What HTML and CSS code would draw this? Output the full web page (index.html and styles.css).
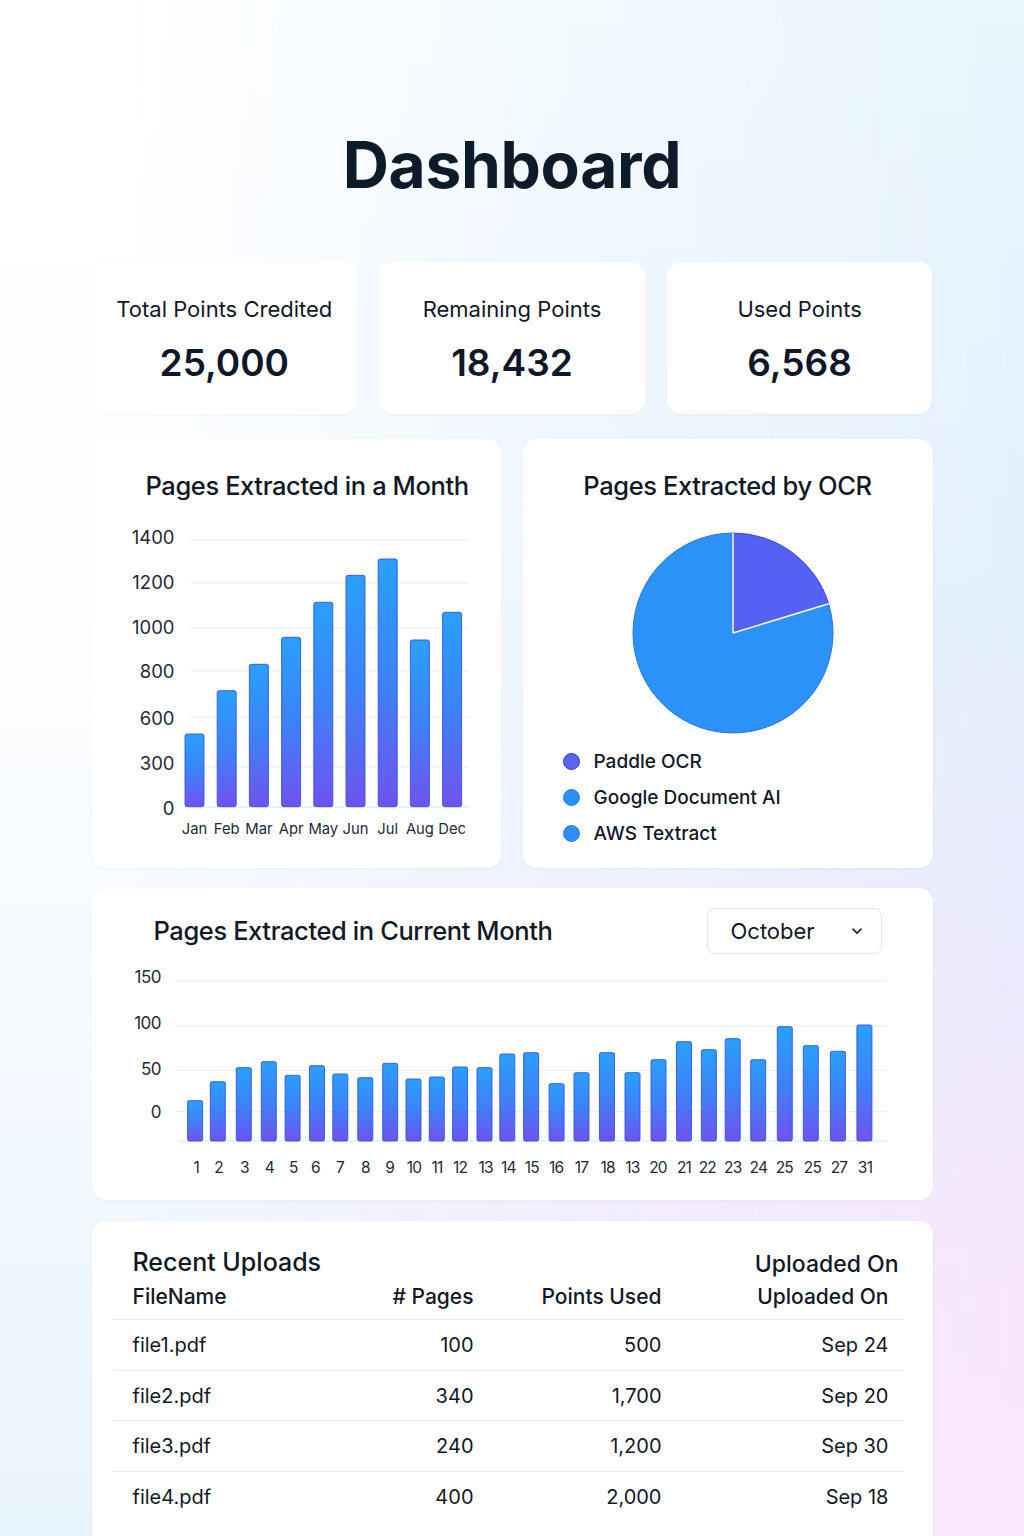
FILE: index.html
```html
<!DOCTYPE html>
<html lang="en">
<head>
<meta charset="utf-8">
<title>Dashboard</title>
<link rel="stylesheet" href="styles.css">
</head>
<body>
<main class="page">
  <h1 class="title">Dashboard</h1>

  <section class="stats">
    <div class="card stat">
      <div class="stat-label">Total Points Credited</div>
      <div class="stat-value">25,000</div>
    </div>
    <div class="card stat">
      <div class="stat-label">Remaining Points</div>
      <div class="stat-value">18,432</div>
    </div>
    <div class="card stat">
      <div class="stat-label">Used Points</div>
      <div class="stat-value">6,568</div>
    </div>
  </section>

  <section class="charts">
    <div class="card chart-card">
      <h2 class="card-title month-title">Pages Extracted in a Month</h2>
      <svg class="month-chart" width="409" height="366" viewBox="0 0 409 366">
        <defs>
          <linearGradient id="barGrad" x1="0" y1="0" x2="0" y2="1">
            <stop offset="0" stop-color="#2aa0fb"/>
            <stop offset="0.5" stop-color="#3d82f7"/>
            <stop offset="1" stop-color="#7052ef"/>
          </linearGradient>
        </defs>
        <g class="grid">
          <line x1="98" y1="38" x2="377" y2="38"/>
          <line x1="98" y1="81" x2="377" y2="81"/>
          <line x1="98" y1="126" x2="377" y2="126"/>
          <line x1="98" y1="169" x2="377" y2="169"/>
          <line x1="98" y1="215" x2="377" y2="215"/>
          <line x1="98" y1="265" x2="377" y2="265"/>
        </g>
        <line class="axis" x1="98" y1="305" x2="377" y2="305"/>
        <g class="ylab">
          <text x="82.5" y="41.5">1400</text>
          <text x="82.5" y="86.5">1200</text>
          <text x="82.5" y="131.5">1000</text>
          <text x="82.5" y="175.5">800</text>
          <text x="82.5" y="222.5">600</text>
          <text x="82.5" y="267.5">300</text>
          <text x="82.5" y="312.5">0</text>
        </g>
        <g class="bars">
          <rect x="93" y="232" width="19" height="72.7" rx="2"/>
          <rect x="125.2" y="188.7" width="19" height="116" rx="2"/>
          <rect x="157.4" y="162.3" width="19" height="142.4" rx="2"/>
          <rect x="189.6" y="135.3" width="19" height="169.4" rx="2"/>
          <rect x="221.8" y="100.3" width="19" height="204.4" rx="2"/>
          <rect x="254" y="73.3" width="19" height="231.4" rx="2"/>
          <rect x="286.2" y="57" width="19" height="247.7" rx="2"/>
          <rect x="318.4" y="138" width="19" height="166.7" rx="2"/>
          <rect x="350.6" y="110.3" width="19" height="194.4" rx="2"/>
        </g>
        <g class="xlab">
          <text x="102.5" y="332">Jan</text>
          <text x="134.7" y="332">Feb</text>
          <text x="166.9" y="332">Mar</text>
          <text x="199.1" y="332">Apr</text>
          <text x="231.3" y="332">May</text>
          <text x="263.5" y="332">Jun</text>
          <text x="295.7" y="332">Jul</text>
          <text x="327.9" y="332">Aug</text>
          <text x="360.1" y="332">Dec</text>
        </g>
      </svg>
    </div>

    <div class="card chart-card">
      <h2 class="card-title center">Pages Extracted by OCR</h2>
      <svg class="pie" width="204" height="204" viewBox="-1 -1 204 204">
        <path d="M101,101 L196.63,71.76 A100,100 0 1 1 101,1 Z" fill="#2b93f7" stroke="#2a72ea" stroke-width="1"/>
        <path d="M101,101 L101,1 A100,100 0 0 1 196.63,71.76 Z" fill="#5561f3" stroke="#3a45e4" stroke-width="1"/>
        <line x1="101" y1="101" x2="101" y2="1" stroke="#ffffff" stroke-width="1.5"/>
        <line x1="101" y1="101" x2="196.63" y2="71.76" stroke="#ffffff" stroke-width="1.5"/>
      </svg>
      <ul class="legend">
        <li><span class="dot dot-paddle"></span>Paddle OCR</li>
        <li><span class="dot dot-google"></span>Google Document AI</li>
        <li><span class="dot dot-aws"></span>AWS Textract</li>
      </ul>
    </div>
  </section>

  <section class="card current-card">
    <div class="current-head">
      <h2 class="card-title">Pages Extracted in Current Month</h2>
      <div class="select">
        <span>October</span>
        <svg class="chev" width="10" height="7" viewBox="0 0 10 7"><path d="M1 1.2 L5 5.2 L9 1.2" fill="none" stroke="#1f2937" stroke-width="1.7" stroke-linecap="round" stroke-linejoin="round"/></svg>
      </div>
    </div>
    <svg class="day-chart" width="841" height="246" viewBox="0 0 841 246">
      <g class="grid">
        <line x1="83" y1="27" x2="795" y2="27"/>
        <line x1="83" y1="72" x2="795" y2="72"/>
        <line x1="83" y1="116.3" x2="795" y2="116.3"/>
        <line x1="83" y1="157.7" x2="795" y2="157.7"/>
      </g>
      <line class="axis" x1="86" y1="187" x2="795" y2="187"/>
      <g class="ylab small">
        <text x="69" y="29">150</text>
        <text x="69" y="75">100</text>
        <text x="69" y="121">50</text>
        <text x="69" y="164">0</text>
      </g>
      <g class="bars">
        <rect x="95.6" y="146.7" width="15" height="40.3" rx="1.5"/>
        <rect x="118.3" y="127.7" width="15" height="59.3" rx="1.5"/>
        <rect x="144.3" y="113.7" width="15" height="73.3" rx="1.5"/>
        <rect x="169.3" y="107.7" width="15" height="79.3" rx="1.5"/>
        <rect x="193.1" y="121.3" width="15" height="65.7" rx="1.5"/>
        <rect x="217.5" y="111.7" width="15" height="75.3" rx="1.5"/>
        <rect x="240.8" y="120" width="15" height="67" rx="1.5"/>
        <rect x="265.8" y="123.7" width="15" height="63.3" rx="1.5"/>
        <rect x="290.7" y="109.3" width="15" height="77.7" rx="1.5"/>
        <rect x="314" y="125" width="15" height="62" rx="1.5"/>
        <rect x="337.3" y="123" width="15" height="64" rx="1.5"/>
        <rect x="360.6" y="113" width="15" height="74" rx="1.5"/>
        <rect x="385" y="113.7" width="15" height="73.3" rx="1.5"/>
        <rect x="407.8" y="100" width="15" height="87" rx="1.5"/>
        <rect x="431.6" y="98.7" width="15" height="88.3" rx="1.5"/>
        <rect x="457.1" y="129.7" width="15" height="57.3" rx="1.5"/>
        <rect x="482" y="118.7" width="15" height="68.3" rx="1.5"/>
        <rect x="507.5" y="98.7" width="15" height="88.3" rx="1.5"/>
        <rect x="533" y="118.7" width="15" height="68.3" rx="1.5"/>
        <rect x="559" y="105.7" width="15" height="81.3" rx="1.5"/>
        <rect x="584.5" y="87.7" width="15" height="99.3" rx="1.5"/>
        <rect x="609.4" y="95.7" width="15" height="91.3" rx="1.5"/>
        <rect x="633.2" y="84.7" width="15" height="102.3" rx="1.5"/>
        <rect x="658.7" y="105.7" width="15" height="81.3" rx="1.5"/>
        <rect x="685.3" y="72.7" width="15" height="114.3" rx="1.5"/>
        <rect x="711.3" y="91.7" width="15" height="95.3" rx="1.5"/>
        <rect x="738.4" y="97.3" width="15" height="89.7" rx="1.5"/>
        <rect x="764.9" y="71" width="15" height="116" rx="1.5"/>
      </g>
      <g class="xlab days">
        <text x="104.2" y="219">1</text>
        <text x="126.5" y="219">2</text>
        <text x="152.5" y="219">3</text>
        <text x="177.4" y="219">4</text>
        <text x="201.3" y="219">5</text>
        <text x="223.5" y="219">6</text>
        <text x="247.9" y="219">7</text>
        <text x="273.3" y="219">8</text>
        <text x="297.7" y="219">9</text>
        <text x="322" y="219">10</text>
        <text x="344.9" y="219">11</text>
        <text x="368.2" y="219">12</text>
        <text x="393.7" y="219">13</text>
        <text x="416.4" y="219">14</text>
        <text x="439.7" y="219">15</text>
        <text x="464.1" y="219">16</text>
        <text x="489.6" y="219">17</text>
        <text x="515.6" y="219">18</text>
        <text x="540.5" y="219">13</text>
        <text x="566" y="219">20</text>
        <text x="592" y="219">21</text>
        <text x="615.3" y="219">22</text>
        <text x="640.8" y="219">23</text>
        <text x="666.3" y="219">24</text>
        <text x="692.3" y="219">25</text>
        <text x="720.5" y="219">25</text>
        <text x="747" y="219">27</text>
        <text x="773" y="219">31</text>
      </g>
    </svg>
  </section>

  <section class="card uploads">
    <div class="uploads-top">
      <h2 class="recent-title">Recent Uploads</h2>
      <div class="top-uploaded">Uploaded On</div>
    </div>
    <div class="urow uhead">
      <div>FileName</div>
      <div class="num"># Pages</div>
      <div class="num">Points Used</div>
      <div class="num">Uploaded On</div>
    </div>
    <div class="urow">
      <div>file1.pdf</div><div class="num">100</div><div class="num">500</div><div class="num">Sep 24</div>
    </div>
    <div class="urow">
      <div>file2.pdf</div><div class="num">340</div><div class="num">1,700</div><div class="num">Sep 20</div>
    </div>
    <div class="urow">
      <div>file3.pdf</div><div class="num">240</div><div class="num">1,200</div><div class="num">Sep 30</div>
    </div>
    <div class="urow">
      <div>file4.pdf</div><div class="num">400</div><div class="num">2,000</div><div class="num">Sep 18</div>
    </div>
  </section>
</main>
</body>
</html>
```

FILE: styles.css
```css
html, body {
  margin: 0;
  padding: 0;
}

body {
  position: relative;
  font-family: Inter, "Noto Sans", "DejaVu Sans", sans-serif;
  color: #111827;
  min-height: 1536px;
  background: linear-gradient(180deg, #ffffff 0%, #fdfeff 40%, #f3f9fe 72%, #e8f4fd 100%);
}

/* right-hand tint: cyan at the top, lavender in the middle, pink at the bottom */
body::before {
  content: "";
  position: absolute;
  inset: 0;
  z-index: -1;
  background: linear-gradient(180deg, #e8f6fe 0%, #e3effd 40%, #eae9fd 62%, #f7e5fd 84%, #fce6fd 100%);
  -webkit-mask-image: linear-gradient(to right, rgba(0, 0, 0, 0) 12%, rgba(0, 0, 0, 0.55) 55%, #000 100%);
  mask-image: linear-gradient(to right, rgba(0, 0, 0, 0) 12%, rgba(0, 0, 0, 0.55) 55%, #000 100%);
}

.page {
  width: 841px;
  margin: 0 auto;
  padding-top: 133px;
}

.title {
  margin: 0 0 65px;
  text-align: center;
  font-size: 64px;
  line-height: 64px;
  font-weight: 700;
  letter-spacing: -0.3px;
  color: #0d1b2a;
}

.card {
  background: #ffffff;
  border-radius: 14px;
  box-shadow: 0 1px 3px rgba(40, 70, 130, 0.05);
}

/* Stat cards */
.stats {
  display: grid;
  grid-template-columns: repeat(3, 1fr);
  gap: 22px;
}

.stat {
  height: 152px;
  box-sizing: border-box;
  padding-top: 33px;
  text-align: center;
}

.stat-label {
  font-size: 22px;
  line-height: 28px;
  font-weight: 400;
  color: #111827;
}

.stat-value {
  margin-top: 18px;
  font-size: 37px;
  line-height: 44px;
  font-weight: 600;
  color: #0f172a;
}

/* Chart row */
.charts {
  display: grid;
  grid-template-columns: 409px 410px;
  gap: 22px;
  margin-top: 25px;
}

.chart-card {
  height: 429px;
  box-sizing: border-box;
  padding-top: 31px;
}

.card-title {
  margin: 0;
  font-size: 25.5px;
  line-height: 32px;
  font-weight: 500;
  letter-spacing: -0.4px;
  color: #111827;
}

.month-title {
  padding-left: 54px;
}

.center {
  text-align: center;
}

.month-chart,
.day-chart {
  display: block;
}

.grid line {
  stroke: #e6edf8;
  stroke-width: 1;
}

.axis {
  stroke: #dde2ea;
  stroke-width: 1;
}

.bars rect {
  fill: url(#barGrad);
  stroke: #2d55ee;
  stroke-width: 0.9;
}

.ylab text {
  font-size: 18.5px;
  fill: #1f2937;
  text-anchor: end;
}

.ylab.small text {
  font-size: 17px;
  letter-spacing: -0.5px;
}

.xlab text {
  font-size: 14.8px;
  fill: #1f2937;
  text-anchor: middle;
}

.xlab.days text {
  font-size: 15.5px;
  letter-spacing: -0.8px;
}

/* Pie */
.pie {
  display: block;
  margin: 29px 0 0 108px;
}

.legend {
  list-style: none;
  margin: 8px 0 0;
  padding: 0 0 0 40px;
}

.legend li {
  display: flex;
  align-items: center;
  height: 36px;
  font-size: 19px;
  font-weight: 500;
  color: #111827;
}

.dot {
  width: 17px;
  height: 17px;
  border-radius: 50%;
  box-sizing: border-box;
  margin-right: 14px;
}

.dot-paddle {
  background: #5b63f1;
  border: 1.5px solid #2f3fe0;
}

.dot-google,
.dot-aws {
  background: #2b8ff6;
  border: 1px solid #2a7ff0;
}

/* Current month */
.current-card {
  margin-top: 20px;
  height: 312px;
  box-sizing: border-box;
}

.current-head {
  display: flex;
  justify-content: space-between;
  align-items: center;
  padding: 20px 51px 0 62px;
}

.select {
  width: 175px;
  height: 46px;
  box-sizing: border-box;
  border: 1px solid #e2e8f1;
  border-radius: 8px;
  display: flex;
  align-items: center;
  justify-content: space-between;
  padding: 0 19px 0 23px;
  font-size: 22px;
  color: #111827;
}

/* Uploads table */
.uploads {
  margin-top: 21px;
  padding: 26px 29px 15px 21px;
  border-bottom-left-radius: 0;
  border-bottom-right-radius: 0;
}

.uploads-top {
  display: flex;
  justify-content: space-between;
  align-items: center;
  height: 30px;
  padding: 0 5px 0 20px;
}

.recent-title {
  margin: 0;
  font-size: 25px;
  font-weight: 500;
  line-height: 30px;
}

.top-uploaded {
  font-size: 23px;
  font-weight: 500;
  margin-top: 4px;
}

.urow {
  display: grid;
  grid-template-columns: 1fr 130px 188px 227px;
  align-items: center;
  box-sizing: border-box;
  height: 50.7px;
  padding: 0 15px 0 20px;
  border-top: 1px solid #e8edf4;
  font-size: 20px;
  color: #111827;
}

.urow.uhead {
  height: 42px;
  padding-top: 0;
  padding-bottom: 4px;
  border-top: none;
  font-size: 21px;
  font-weight: 500;
}

.num {
  text-align: right;
}
```
